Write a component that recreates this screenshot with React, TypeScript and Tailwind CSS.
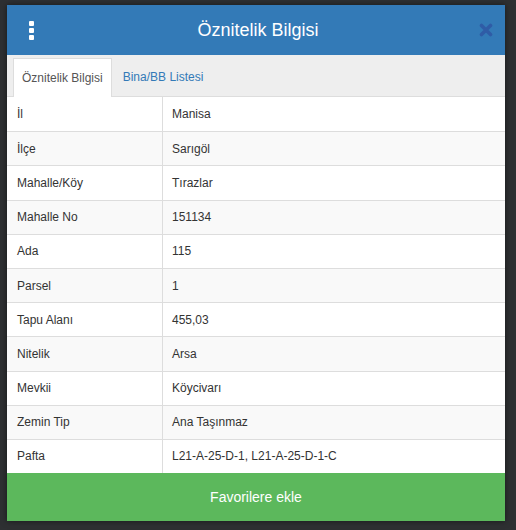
import React from 'react'

const rows: [string, string][] = [
  ['İl', 'Manisa'],
  ['İlçe', 'Sarıgöl'],
  ['Mahalle/Köy', 'Tırazlar'],
  ['Mahalle No', '151134'],
  ['Ada', '115'],
  ['Parsel', '1'],
  ['Tapu Alanı', '455,03'],
  ['Nitelik', 'Arsa'],
  ['Mevkii', 'Köycivarı'],
  ['Zemin Tip', 'Ana Taşınmaz'],
  ['Pafta', 'L21-A-25-D-1, L21-A-25-D-1-C'],
]

const App = () => {
  return (
    <div className="w-[516px] h-[530px] bg-[#2e3032] pt-[5px] pl-[7px] font-['Liberation_Sans',Arial,sans-serif] text-[12px] text-[#333]">
      <div className="w-[498px] bg-white shadow-[0_0_6px_rgba(0,0,0,0.5)]">
        {/* header */}
        <div className="h-[50px] bg-[#337ab7] flex items-center pl-[22px] pr-[12px] text-white">
          <div className="flex flex-col gap-[2px] w-[5px] items-center">
            <span className="w-[5px] h-[5px] rounded-[1px] bg-white" />
            <span className="w-[5px] h-[5px] rounded-[1px] bg-white" />
            <span className="w-[5px] h-[5px] rounded-[1px] bg-white" />
          </div>
          <div className="flex-1 text-center text-[18px] pl-[3px]">Öznitelik Bilgisi</div>
          <svg width="14" height="14" viewBox="0 0 14 14">
            <path d="M2.5 2.5 L11.5 11.5 M11.5 2.5 L2.5 11.5" stroke="#2f5ca6" strokeWidth="3.6" strokeLinecap="round" />
          </svg>
        </div>

        {/* tabs */}
        <div className="h-[42px] bg-[#eeeeee] flex items-end pl-[6px] border-b border-[#ddd]">
          <div className="h-[39px] px-[8px] flex items-center bg-white border border-b-0 border-[#ddd] text-[#555] mb-[-1px]">
            Öznitelik Bilgisi
          </div>
          <div className="h-[39px] px-[11px] flex items-center text-[#337ab7]">Bina/BB Listesi</div>
        </div>

        {/* attribute table */}
        <div>
          {rows.map(([k, v], i) => (
            <div
              key={k}
              className={`flex h-[34.2px] border-t border-[#ddd] first:border-t-0 ${i % 2 === 1 ? 'bg-[#f9f9f9]' : 'bg-white'}`}
            >
              <div className="w-[156px] pl-[10px] flex items-center border-r border-[#ddd]">{k}</div>
              <div className="flex-1 pl-[9px] flex items-center">{v}</div>
            </div>
          ))}
        </div>

        <button className="w-full h-[48px] bg-[#5cb85c] text-white text-[14px] flex items-center justify-center">
          Favorilere ekle
        </button>
      </div>
    </div>
  )
}

export default App
